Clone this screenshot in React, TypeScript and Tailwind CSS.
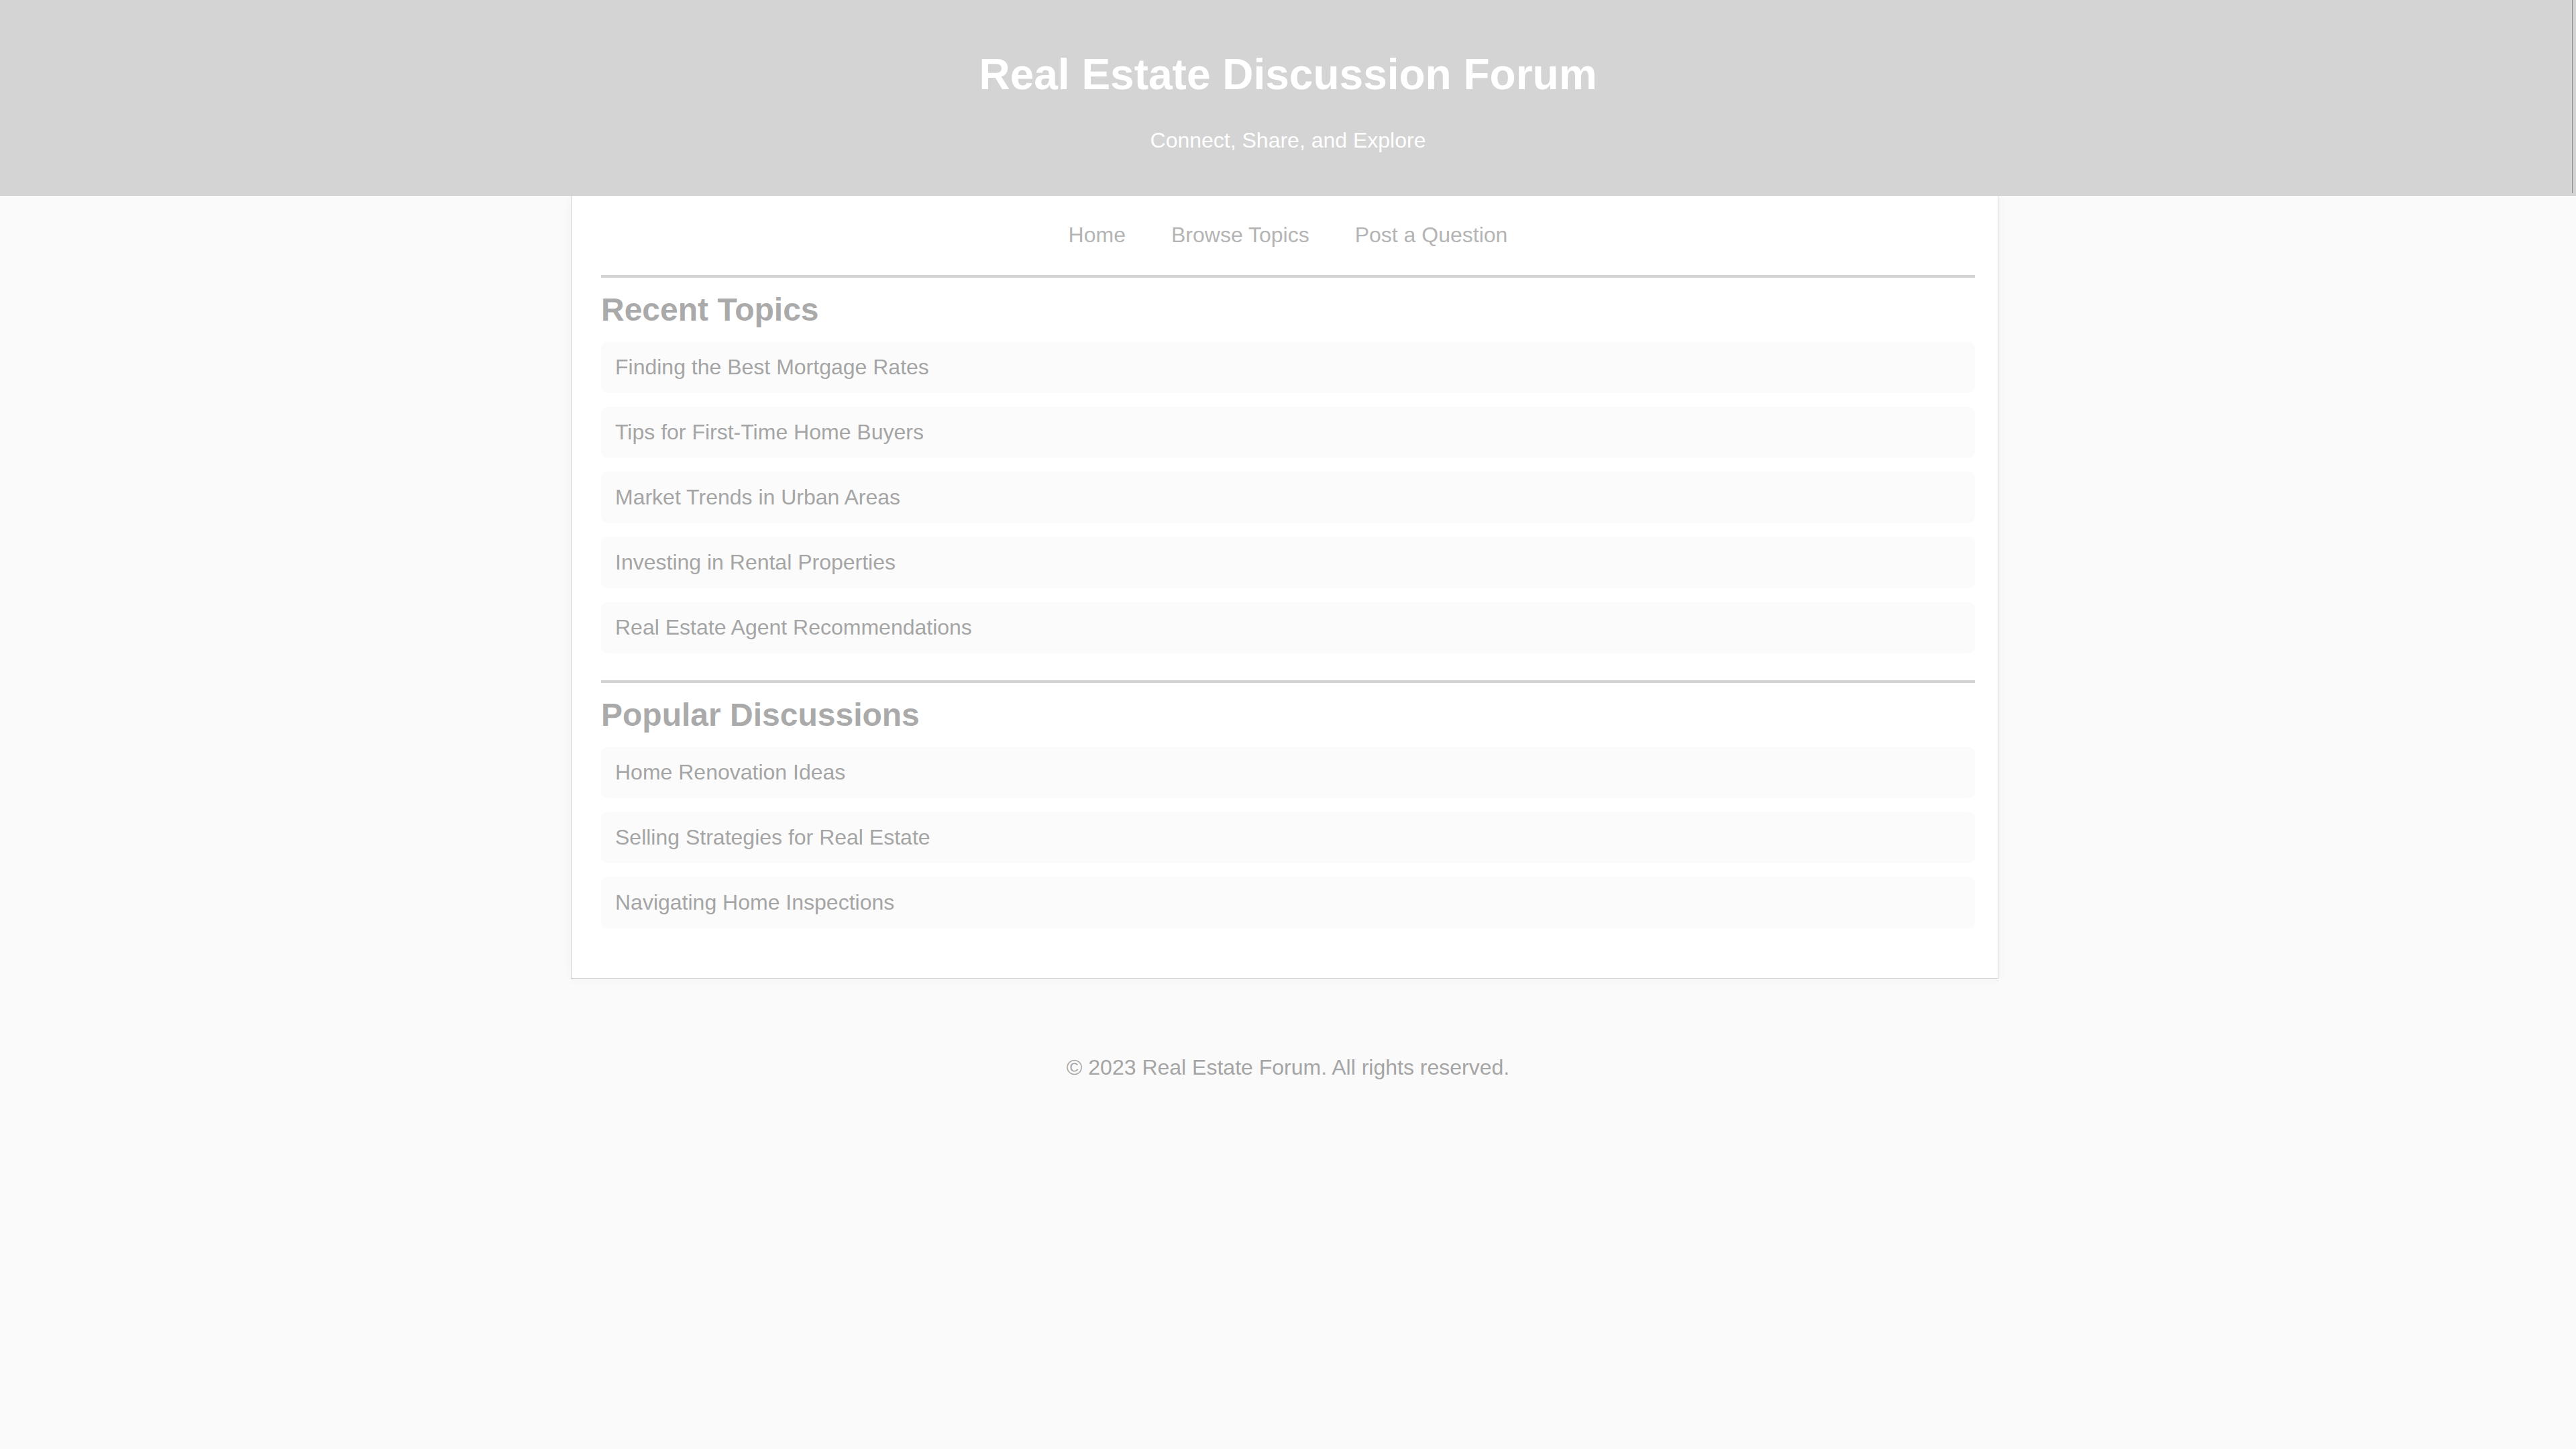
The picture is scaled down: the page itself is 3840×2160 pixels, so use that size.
import React from "react";

const recent = [
  "Finding the Best Mortgage Rates",
  "Tips for First-Time Home Buyers",
  "Market Trends in Urban Areas",
  "Investing in Rental Properties",
  "Real Estate Agent Recommendations",
];

const popular = [
  "Home Renovation Ideas",
  "Selling Strategies for Real Estate",
  "Navigating Home Inspections",
];

function Section({ title, items, last }: { title: string; items: string[]; last?: boolean }) {
  return (
    <section className={last ? "" : "mb-[40px]"}>
      <div className="h-[4px] bg-[#d3d3d3]" />
      <h2 className="mt-[20px] mb-[20px] text-[48px] leading-[55px] font-bold text-[#aaaaaa]">{title}</h2>
      <ul className="flex flex-col gap-[20px]">
        {items.map((t) => (
          <li
            key={t}
            className="rounded-[10px] bg-[#fbfbfb] px-[21px] py-[20px] text-[32px] leading-[37px] text-[#a5a5a5]"
          >
            {t}
          </li>
        ))}
      </ul>
    </section>
  );
}

export default function App() {
  return (
    <div
      className="min-h-[2160px] bg-[#fafafa]"
      style={{ fontFamily: '"Liberation Sans", Arial, Helvetica, sans-serif' }}
    >
      <header className="relative bg-[#d4d4d4] pt-[74px] pb-[64px] text-center text-white">
        <h1 className="text-[64px] leading-[74px] font-bold">Real Estate Discussion Forum</h1>
        <p className="mt-[43px] text-[32px] leading-[37px]">Connect, Share, and Explore</p>
        <div className="absolute right-[5px] top-0 h-[288px] w-px bg-[#8c8c8c]" />
      </header>

      <div className="pr-[10px]">
        <main className="mx-auto w-[2128px] border-x border-b border-[#d2d2d2] bg-white pl-[44px] pr-[34px] pt-[40px] pb-[74px] shadow-[0_0_20px_rgba(0,0,0,0.03)]">
          <nav className="flex justify-center gap-[68px] text-[32px] leading-[37px] text-[#b4b4b4]">
            <a>Home</a>
            <a>Browse Topics</a>
            <a>Post a Question</a>
          </nav>
          <div className="mt-[41px]">
            <Section title="Recent Topics" items={recent} />
            <Section title="Popular Discussions" items={popular} last />
          </div>
        </main>
      </div>

      <footer className="pt-[114px] text-center text-[32px] leading-[37px] text-[#a5a5a5]">
        © 2023 Real Estate Forum. All rights reserved.
      </footer>
    </div>
  );
}
